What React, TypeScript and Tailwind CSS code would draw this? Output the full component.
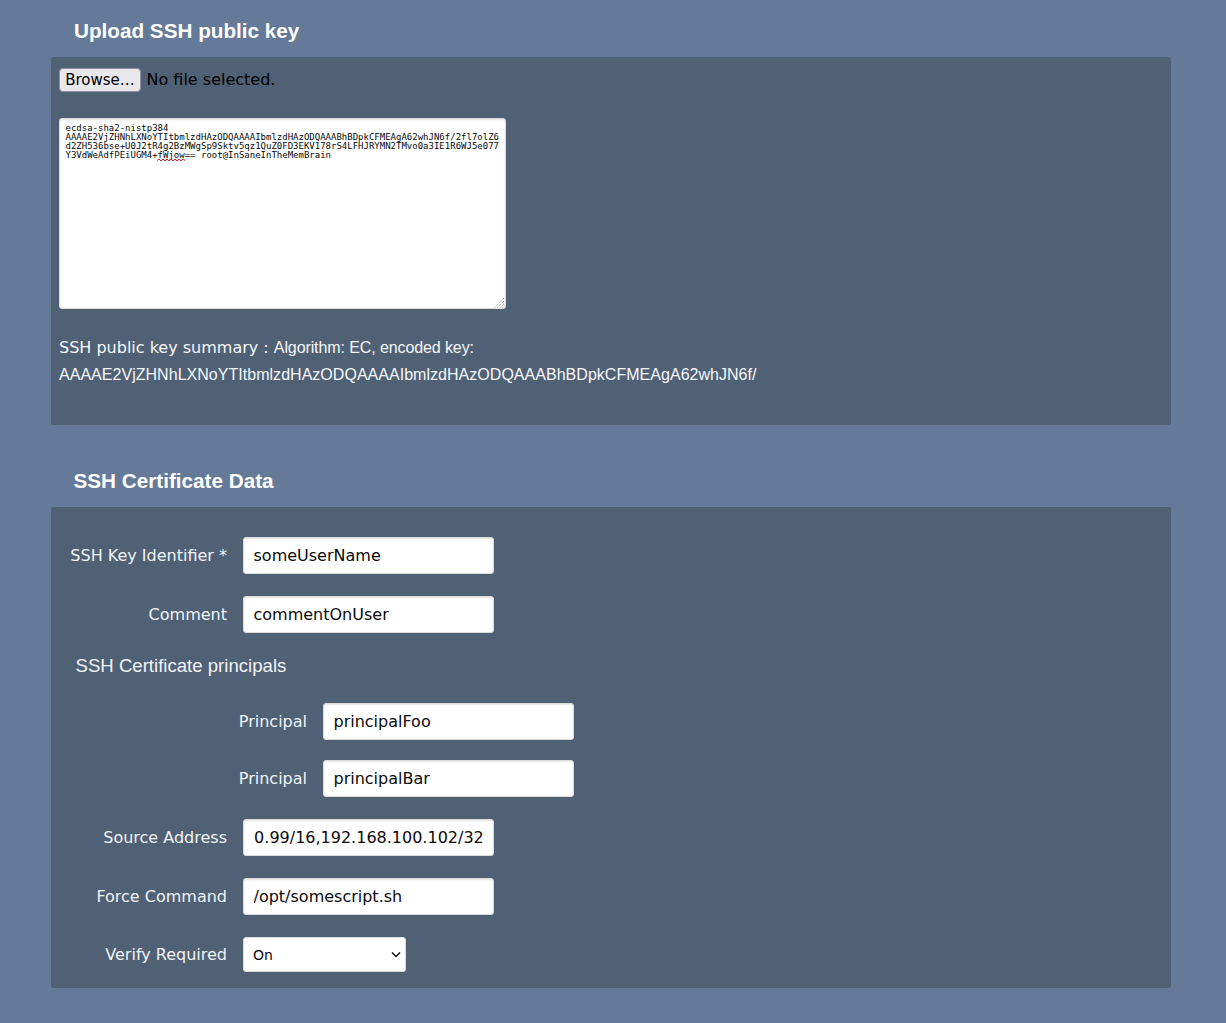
const KEY = `ecdsa-sha2-nistp384
AAAAE2VjZHNhLXNoYTItbmlzdHAzODQAAAAIbmlzdHAzODQAAABhBDpkCFMEAgA62whJN6f/2fl7olZ6
d2ZH536bse+U0J2tR4g2BzMWgSp9Sktv5qz1QuZ0FD3EKV178rS4LFHJRYMN2TMvo0a3IE1R6WJ5e077
Y3VdWeAdfPEiUGM4+fWjow== root@InSaneInTheMemBrain`;

const dejavu = "font-['DejaVu_Sans',sans-serif]";
const liberation = "font-['Liberation_Sans',Arial,sans-serif]";
const inputCls = `w-[251px] h-[37px] rounded-[3px] bg-white border border-[#dbdbdb] px-[9.5px] text-[16px] text-[#0a0a0a] shadow-[inset_0_1px_2px_rgba(10,10,10,0.1)] outline-none ${dejavu}`;
const labelCls = `text-right text-[16px] text-[#f0f3f6] ${dejavu}`;

function Row({ label, value, labelWidth = "w-[168px]", mb = "mb-[22px]" }: { label: string; value: string; labelWidth?: string; mb?: string }) {
  return (
    <div className={`flex items-center gap-4 ${mb}`}>
      <label className={`${labelWidth} ${labelCls}`}>{label}</label>
      <input className={inputCls} readOnly value={value} />
    </div>
  );
}

export default function App() {
  return (
    <div className="min-h-[1023px] bg-[#657a99] pl-[51px] pr-[55px]">
      <h2 className={`pt-[18px] pl-[23px] h-[57px] text-[20.7px] leading-[26px] font-bold text-white ${liberation}`}>Upload SSH public key</h2>
      <section className="h-[368px] rounded-[2px] bg-[#506176] px-2 pt-[11px]">
        <div className="flex items-center gap-[5.5px]">
          <button className={`h-[24px] w-[82px] rounded-[4px] border border-[#8f8f9d] bg-[#e9e9ed] text-[15px] text-black ${dejavu}`}>Browse…</button>
          <span className={`text-[16px] text-black ${dejavu}`}>No file selected.</span>
        </div>
        <div className="relative mt-[26px] h-[191px] w-[447px]">
          <textarea
            readOnly
            spellCheck={false}
            wrap="off"
            value={KEY}
            className="block h-full w-full resize-none overflow-hidden whitespace-pre rounded-[3px] border border-[#dbdbdb] bg-white pl-[5.5px] pr-0 pt-[5px] text-[9px] leading-[9px] text-[#0a0a0a] shadow-[inset_0_1px_2px_rgba(10,10,10,0.1)] outline-none font-['DejaVu_Sans_Mono',monospace]"
          />
          <svg className="absolute left-[98px] top-[40px]" width="28" height="4" viewBox="0 0 28 4" fill="none">
            <path d="M0 2.5 L2 1 L4 3 L6 1 L8 3 L10 1 L12 3 L14 1 L16 3 L18 1 L20 3 L22 1 L24 3 L26 1 L28 2.5" stroke="#e02020" strokeWidth="1" />
          </svg>
          <svg className="absolute right-[1px] bottom-[1px]" width="11" height="11" viewBox="0 0 11 11" fill="none" stroke="#8a8a8a" strokeWidth="1" strokeDasharray="1 1">
            <path d="M0.5 10.5 L10.5 0.5" />
            <path d="M3.5 10.5 L10.5 3.5" />
            <path d="M6.5 10.5 L10.5 6.5" />
            <path d="M9 10.5 L10.5 9" />
          </svg>
        </div>
        <p className={`mt-[25px] text-[16px] leading-[27px] text-[#f5f7f9] ${liberation}`}>
          <span className={`text-[16px] ${dejavu}`}>SSH public key summary : </span>
          <span className="tracking-[-0.1px]">Algorithm: EC, encoded key:</span>
          <br />
          <span className="tracking-[0.03px]">AAAAE2VjZHNhLXNoYTItbmlzdHAzODQAAAAIbmlzdHAzODQAAABhBDpkCFMEAgA62whJN6f/</span>
        </p>
      </section>
      <h2 className={`pt-[43px] pl-[22.5px] h-[82px] text-[20.7px] leading-[26px] font-bold text-white ${liberation}`}>SSH Certificate Data</h2>
      <section className="h-[481px] rounded-[2px] bg-[#506176] px-2 pt-[30px]">
        <Row label="SSH Key Identifier *" value="someUserName" />
        <Row label="Comment" value="commentOnUser" mb="mb-[20px]" />
        <h3 className={`pl-[16.5px] mb-[24px] h-[26px] text-[18.6px] leading-[26px] text-[#f0f3f6] ${liberation}`}>SSH Certificate principals</h3>
        <Row label="Principal" value="principalFoo" labelWidth="w-[248px]" mb="mb-[20px]" />
        <Row label="Principal" value="principalBar" labelWidth="w-[248px]" />
        <div className="flex items-center gap-4 mb-[22px]">
          <label className={`w-[168px] ${labelCls}`}>Source Address</label>
          <input className={inputCls} readOnly value="192.168.100.99/16,192.168.100.102/32" ref={(el) => { if (el) el.scrollLeft = 9999; }} />
        </div>
        <Row label="Force Command" value="/opt/somescript.sh" />
        <div className="flex items-center gap-4">
          <label className={`w-[168px] ${labelCls}`}>Verify Required</label>
          <div className="relative h-[35px] w-[163px]">
            <select className={`block h-full w-full appearance-none rounded-[3px] border border-[#dbdbdb] bg-white pl-[9px] pt-[1px] text-[14px] text-[#0a0a0a] outline-none ${dejavu}`} defaultValue="On">
              <option>On</option>
              <option>Off</option>
            </select>
            <svg className="pointer-events-none absolute right-[5px] top-[14px]" width="10" height="7" viewBox="0 0 10 7" fill="none" stroke="#111" strokeWidth="1.5">
              <path d="M1 1.5 L5 5.5 L9 1.5" />
            </svg>
          </div>
        </div>
      </section>
    </div>
  );
}
